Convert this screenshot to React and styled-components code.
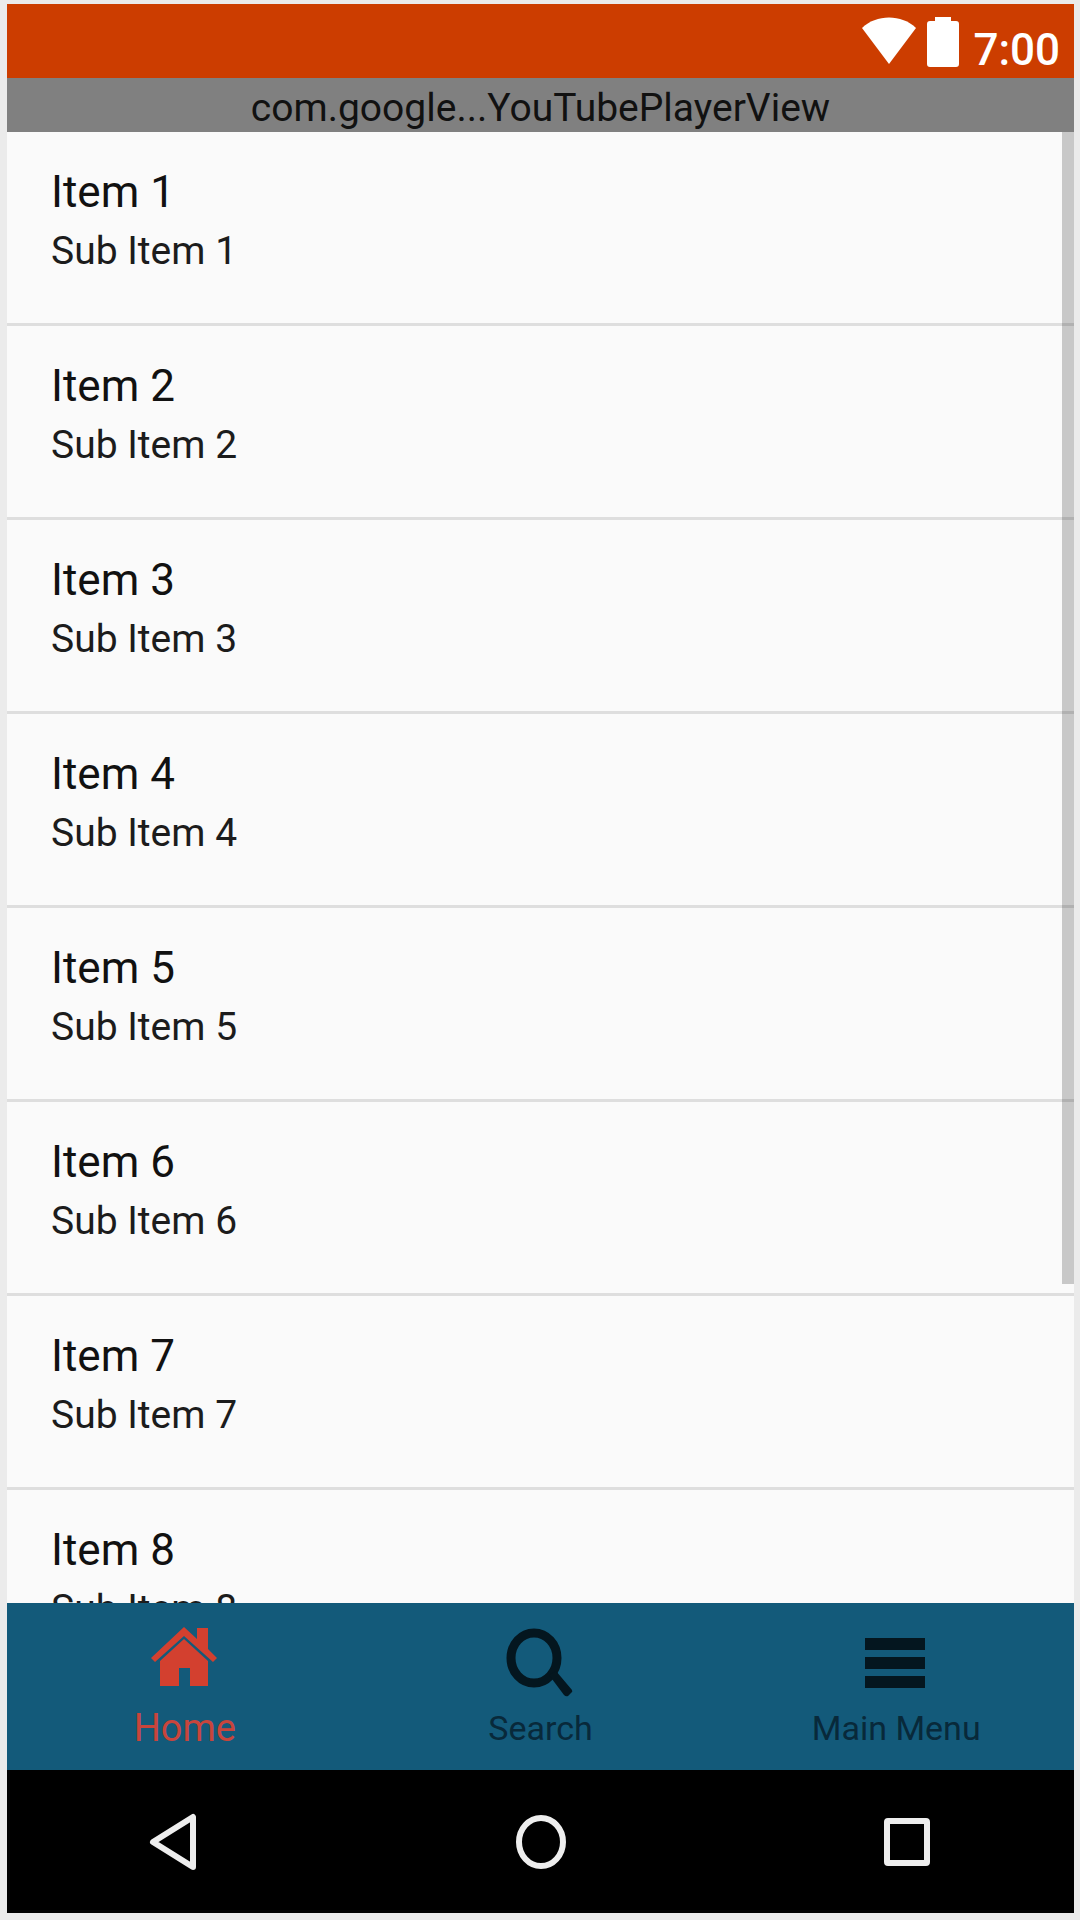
import React from "react";
import styled, { createGlobalStyle } from "styled-components";

const items = [1, 2, 3, 4, 5, 6, 7, 8];

function App() {
  return (
    <>
      <GlobalStyle />
      <Screen>
        <Phone>
          <StatusBar>
            <WifiIcon viewBox="0 0 56 48" aria-hidden="true">
              <path d="M1 11 C15 -3 41 -3 55 11 L28 47 Z" fill="#fff" />
            </WifiIcon>
            <BatteryIcon viewBox="0 0 32 50" aria-hidden="true">
              <path
                d="M8 0 H24 V4 H29 Q32 4 32 7 V47 Q32 50 29 50 H3 Q0 50 0 47 V7 Q0 4 3 4 H8 Z"
                fill="#fff"
              />
            </BatteryIcon>
            <Clock>7:00</Clock>
          </StatusBar>

          <PlayerView>com.google...YouTubePlayerView</PlayerView>

          <ListArea>
            <List>
              {items.map((n) => (
                <Row key={n}>
                  <Title>Item {n}</Title>
                  <SubTitle>Sub Item {n}</SubTitle>
                </Row>
              ))}
            </List>
            <ScrollThumb />
          </ListArea>

          <TabBar>
            <Tab type="button" $active>
              <TabIcon viewBox="0 0 72 72" aria-hidden="true">
                <path
                  d="M35 2 L48 14 V3 H59 V24 L68 33 L64 37 L35 11 L6 37 L2 33 Z"
                  fill="currentColor"
                />
                <path
                  d="M35 14 L59 36 V61 H41 V43 H30 V61 H11 V36 Z"
                  fill="currentColor"
                />
              </TabIcon>
              <TabLabel $active>Home</TabLabel>
            </Tab>
            <Tab type="button">
              <TabIcon viewBox="0 0 72 72" aria-hidden="true">
                <ellipse
                  cx="29"
                  cy="33"
                  rx="23"
                  ry="25"
                  fill="none"
                  stroke="currentColor"
                  strokeWidth="9"
                />
                <path
                  d="M44 50 L51 46 L67 65 Q68 67 66 68 L63 71 Q61 72 59 70 Z"
                  fill="currentColor"
                />
              </TabIcon>
              <TabLabel>Search</TabLabel>
            </Tab>
            <Tab type="button">
              <TabIcon viewBox="0 0 72 72" aria-hidden="true">
                <path
                  d="M5 13 H65 V25 H5 Z M5 32 H65 V44 H5 Z M5 51 H65 V63 H5 Z"
                  fill="currentColor"
                />
              </TabIcon>
              <TabLabel>Main Menu</TabLabel>
            </Tab>
          </TabBar>

          <NavBar>
            <NavButton type="button" aria-label="Back">
              <NavIcon viewBox="0 0 60 60">
                <path d="M10 30 L50 5 V55 Z" />
              </NavIcon>
            </NavButton>
            <NavButton type="button" aria-label="Home screen">
              <NavIcon viewBox="0 0 60 60">
                <ellipse cx="30" cy="30" rx="22" ry="24" />
              </NavIcon>
            </NavButton>
            <NavButton type="button" aria-label="Recent apps">
              <NavIcon viewBox="0 0 60 60">
                <rect x="9" y="9" width="40" height="42" rx="1" />
              </NavIcon>
            </NavButton>
          </NavBar>
        </Phone>
      </Screen>
    </>
  );
}

export default App;

const GlobalStyle = createGlobalStyle`
  * {
    box-sizing: border-box;
  }
  body {
    margin: 0;
    background: #ebebeb;
    font-family: Roboto, "Liberation Sans", sans-serif;
  }
  button {
    border: 0;
    padding: 0;
    background: none;
    font-family: inherit;
  }
`;

const Screen = styled.div`
  height: 100vh;
  padding: 4px 6px 7px 7px;
`;

const Phone = styled.div`
  display: flex;
  flex-direction: column;
  height: 100%;
  background: #fafafa;
`;

const StatusBar = styled.header`
  display: flex;
  justify-content: flex-end;
  align-items: flex-start;
  gap: 10px;
  height: 74px;
  padding: 13px 14px 0 0;
  background: #cc3d00;
`;

const WifiIcon = styled.svg`
  width: 56px;
  height: 48px;
`;

const BatteryIcon = styled.svg`
  width: 32px;
  height: 50px;
`;

const Clock = styled.span`
  margin-left: 4px;
  color: #fff;
  font-size: 44px;
  font-weight: 500;
  line-height: 66px;
`;

const PlayerView = styled.div`
  height: 54px;
  background: #808080;
  color: #111;
  font-size: 39px;
  line-height: 60px;
  text-align: center;
`;

const ListArea = styled.main`
  position: relative;
  flex: 1;
  min-height: 0;
  overflow: hidden;
`;

const List = styled.ul`
  margin: 0;
  padding: 0;
  list-style: none;
`;

const Row = styled.li`
  height: 194px;
  padding: 30px 44px 0;
  border-bottom: 3px solid #dedede;
`;

const Title = styled.div`
  color: #111;
  font-size: 44px;
  line-height: 60px;
`;

const SubTitle = styled.div`
  color: #1c1c1c;
  font-size: 39px;
  line-height: 58px;
`;

const ScrollThumb = styled.div`
  position: absolute;
  top: 0;
  right: 0;
  width: 12px;
  height: 78.3%;
  background: rgba(0, 0, 0, 0.2);
`;

const TabBar = styled.nav`
  display: flex;
  height: 167px;
  background: #135a7a;
`;

const Tab = styled.button`
  display: flex;
  flex: 1;
  flex-direction: column;
  align-items: center;
  padding-top: 20px;
  color: ${(props) => (props.$active ? "#d3402f" : "#04161f")};
`;

const TabIcon = styled.svg`
  width: 72px;
  height: 76px;
`;

const TabLabel = styled.span`
  color: ${(props) => (props.$active ? "#c8453c" : "#08293a")};
  font-size: ${(props) => (props.$active ? "38px" : "34px")};
  line-height: 58px;
`;

const NavBar = styled.footer`
  display: flex;
  justify-content: space-between;
  align-items: center;
  height: 143px;
  padding: 0 136px;
  background: #000;
`;

const NavButton = styled.button`
  display: flex;
`;

const NavIcon = styled.svg`
  width: 60px;
  height: 60px;
  fill: none;
  stroke: #eee;
  stroke-width: 6px;
  stroke-linejoin: round;
`;
